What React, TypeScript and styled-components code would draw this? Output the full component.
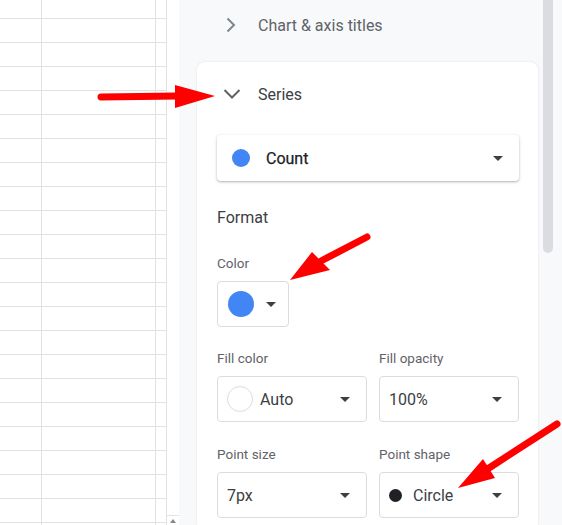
import React from 'react';
import styled, { createGlobalStyle } from 'styled-components';

const GlobalStyle = createGlobalStyle`
  html, body {
    margin: 0;
    padding: 0;
  }
  body {
    width: 562px;
    height: 525px;
    overflow: hidden;
    background: #fff;
    font-family: Roboto, "Noto Sans", "Liberation Sans", Arial, sans-serif;
  }
`;

const Page = styled.div`
  position: relative;
  display: flex;
  width: 562px;
  height: 525px;
  overflow: hidden;
`;

/* spreadsheet on the left */
const Sheet = styled.div`
  width: 167px;
  flex: none;
  overflow: hidden;
`;

const SheetRows = styled.div`
  margin-top: -5px;
`;

const SheetRow = styled.div`
  display: flex;
  height: 24px;
  box-sizing: border-box;
  border-bottom: 1px solid #e2e2e2;
`;

const Cell = styled.div<{ $w: number }>`
  width: ${(p) => p.$w}px;
  flex: none;
  box-sizing: border-box;
  border-right: 1px solid #e2e2e2;
`;

const SheetScroll = styled.div`
  width: 12px;
  flex: none;
  display: flex;
  flex-direction: column;
  justify-content: flex-end;
`;

const ScrollButton = styled.div`
  height: 10px;
  box-sizing: border-box;
  border-top: 1px solid #e2e2e2;
  display: flex;
  justify-content: center;
  padding-top: 3px;
`;

const UpTick = styled.span`
  width: 0;
  height: 0;
  border-left: 3px solid transparent;
  border-right: 3px solid transparent;
  border-bottom: 4px solid #888;
`;

/* chart editor panel */
const Panel = styled.div`
  flex: 1;
  display: flex;
  background: #f8f9fa;
  overflow: hidden;
`;

const PanelContent = styled.div`
  width: 364px;
  flex: none;
  display: flex;
  flex-direction: column;
`;

const ScrollTrack = styled.div`
  width: 10px;
  flex: none;
`;

const ScrollThumb = styled.div`
  height: 253px;
  background: #dadce0;
  border-radius: 0 0 5px 5px;
`;

const SectionHeader = styled.div`
  height: 50px;
  display: flex;
  align-items: center;
  gap: 15px;
  padding-left: 40px;
  font-size: 16px;
  color: #5f6368;
`;

const Card = styled.div`
  flex: 1;
  width: 341px;
  box-sizing: border-box;
  margin: 12px 0 0 18px;
  padding: 0 19px 0 20px;
  background: #fff;
  border-radius: 8px 8px 0 0;
  box-shadow: 0 0 2px rgba(60, 64, 67, 0.15);
`;

const CardHeader = styled.div`
  height: 64px;
  display: flex;
  align-items: center;
  gap: 14px;
  margin-left: 3px;
  font-size: 16px;
  color: #3c4043;
`;

const SeriesSelect = styled.div`
  height: 46px;
  display: flex;
  align-items: center;
  margin-top: 9px;
  padding: 0 16px 0 15px;
  border-radius: 4px;
  background: #fff;
  box-shadow: 0 1px 2px rgba(60, 64, 67, 0.3), 0 1px 4px rgba(60, 64, 67, 0.12);
`;

const Dot = styled.span<{ $size: number; $color: string; $outline?: boolean }>`
  width: ${(p) => p.$size}px;
  height: ${(p) => p.$size}px;
  flex: none;
  box-sizing: border-box;
  border-radius: 50%;
  background: ${(p) => p.$color};
  border: ${(p) => (p.$outline ? '1px solid #dadce0' : 'none')};
`;

const SeriesName = styled.span`
  flex: 1;
  margin-left: 16px;
  font-size: 16px;
  font-weight: 400;
  color: #202124;
  -webkit-text-stroke: 0.25px #202124;
`;

const Caret = styled.span`
  width: 0;
  height: 0;
  flex: none;
  border-left: 5px solid transparent;
  border-right: 5px solid transparent;
  border-top: 5px solid #3c4043;
`;

const Heading = styled.div`
  margin-top: 25px;
  line-height: 24px;
  font-size: 16px;
  color: #3c4043;
`;

const FieldRow = styled.div<{ $top: number }>`
  display: grid;
  grid-template-columns: 150px 140px;
  column-gap: 12px;
  margin-top: ${(p) => p.$top}px;
`;

const Field = styled.div`
  display: flex;
  flex-direction: column;
  align-items: flex-start;
`;

const Label = styled.div`
  line-height: 20px;
  font-size: 13.5px;
  color: #5f6368;
  margin-bottom: 8px;
`;

const Control = styled.div<{ $width: number; $pl: number }>`
  width: ${(p) => p.$width}px;
  height: 46px;
  box-sizing: border-box;
  display: flex;
  align-items: center;
  padding: 0 16px 0 ${(p) => p.$pl}px;
  border: 1px solid #dadce0;
  border-radius: 4px;
  background: #fff;
`;

const Value = styled.span<{ $gap?: number }>`
  flex: 1;
  margin-left: ${(p) => p.$gap ?? 0}px;
  font-size: 16px;
  color: #3c4043;
`;

const ColorCaretGap = styled.span`
  width: 12px;
  flex: none;
`;

const Annotations = styled.svg`
  position: absolute;
  left: 0;
  top: 0;
  pointer-events: none;
`;

const ChevronRight = () => (
  <svg width="24" height="24" viewBox="0 0 24 24">
    <polyline points="8.5,5.5 15,12 8.5,18.5" fill="none" stroke="#80868b" strokeWidth="2" />
  </svg>
);

const ChevronDown = () => (
  <svg width="24" height="24" viewBox="0 0 24 24">
    <polyline points="4.5,8 12,15.5 19.5,8" fill="none" stroke="#5f6368" strokeWidth="2" />
  </svg>
);

const RED = '#ff0000';

const Arrow = ({ tail, neck, tip, wings }: { tail: [number, number]; neck: [number, number]; tip: [number, number]; wings: [[number, number], [number, number]] }) => (
  <g>
    <line x1={tail[0]} y1={tail[1]} x2={neck[0]} y2={neck[1]} stroke={RED} strokeWidth="7" strokeLinecap="round" />
    <polygon points={`${wings[0].join(',')} ${tip.join(',')} ${wings[1].join(',')}`} fill={RED} />
  </g>
);

const rows = Array.from({ length: 23 });

export default function App() {
  return (
    <>
      <GlobalStyle />
      <Page>
        <Sheet>
          <SheetRows>
            {rows.map((_, i) => (
              <SheetRow key={i}>
                <Cell $w={42} />
                <Cell $w={114} />
                <Cell $w={11} />
              </SheetRow>
            ))}
          </SheetRows>
        </Sheet>
        <SheetScroll>
          <ScrollButton>
            <UpTick />
          </ScrollButton>
        </SheetScroll>

        <Panel>
          <PanelContent>
            <SectionHeader>
              <ChevronRight />
              Chart &amp; axis titles
            </SectionHeader>
            <Card>
              <CardHeader>
                <ChevronDown />
                Series
              </CardHeader>
              <SeriesSelect>
                <Dot $size={18} $color="#4285f4" />
                <SeriesName>Count</SeriesName>
                <Caret />
              </SeriesSelect>

              <Heading>Format</Heading>

              <FieldRow $top={23}>
                <Field>
                  <Label>Color</Label>
                  <Control $width={72} $pl={10}>
                    <Dot $size={26} $color="#4285f4" />
                    <ColorCaretGap />
                    <Caret />
                  </Control>
                </Field>
              </FieldRow>

              <FieldRow $top={21}>
                <Field>
                  <Label>Fill color</Label>
                  <Control $width={150} $pl={9}>
                    <Dot $size={26} $color="#fff" $outline />
                    <Value $gap={7}>Auto</Value>
                    <Caret />
                  </Control>
                </Field>
                <Field>
                  <Label>Fill opacity</Label>
                  <Control $width={140} $pl={9}>
                    <Value>100%</Value>
                    <Caret />
                  </Control>
                </Field>
              </FieldRow>

              <FieldRow $top={22}>
                <Field>
                  <Label>Point size</Label>
                  <Control $width={150} $pl={9}>
                    <Value>7px</Value>
                    <Caret />
                  </Control>
                </Field>
                <Field>
                  <Label>Point shape</Label>
                  <Control $width={140} $pl={9}>
                    <Dot $size={13} $color="#202124" />
                    <Value $gap={11}>Circle</Value>
                    <Caret />
                  </Control>
                </Field>
              </FieldRow>
            </Card>
          </PanelContent>
          <ScrollTrack>
            <ScrollThumb />
          </ScrollTrack>
        </Panel>

        <Annotations width="562" height="525" viewBox="0 0 562 525">
          <Arrow tail={[101, 97]} neck={[178, 96]} tip={[215, 96]} wings={[[175, 85], [175, 108]]} />
          <Arrow tail={[367, 237]} neck={[321, 261]} tip={[290, 280]} wings={[[312, 252], [330, 270]]} />
          <Arrow tail={[557, 424]} neck={[489, 468]} tip={[458, 488]} wings={[[483, 459], [495, 478]]} />
        </Annotations>
      </Page>
    </>
  );
}
